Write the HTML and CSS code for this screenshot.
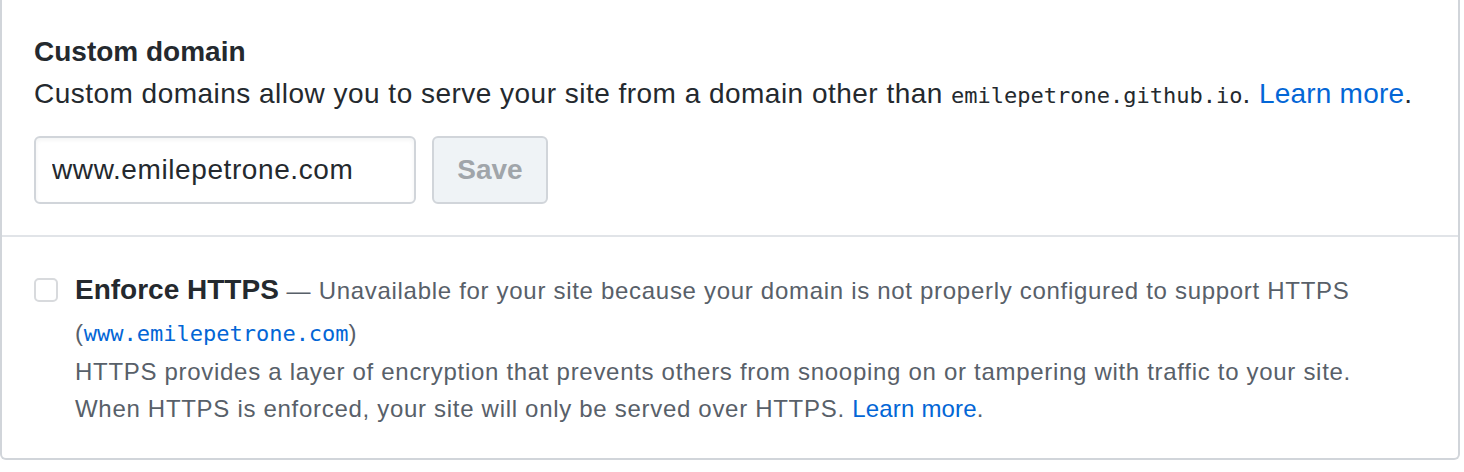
FILE: index.html
```html
<!DOCTYPE html>
<html>
<head>
<meta charset="utf-8">
<link rel="stylesheet" href="styles.css">
</head>
<body>
<div class="box">
  <section class="row">
    <h3 class="heading">Custom domain</h3>
    <p class="desc">Custom domains allow you to serve your site from a domain other than <code class="mono">emilepetrone.github.io</code>. <a class="link" href="#">Learn more</a>.</p>
    <form class="domain-form">
      <input class="input" type="text" value="www.emilepetrone.com">
      <button class="btn" type="button" disabled>Save</button>
    </form>
  </section>
  <section class="row row-check">
    <div class="form-checkbox">
      <span class="checkbox"></span>
      <div class="check-body">
        <p class="check-line"><strong class="check-label">Enforce HTTPS</strong> <span class="note">— Unavailable for your site because your domain is not properly configured to support HTTPS (<a class="mono link" href="#">www.emilepetrone.com</a>)</span></p>
        <p class="note note-block">HTTPS provides a layer of encryption that prevents others from snooping on or tampering with traffic to your site.<br>When HTTPS is enforced, your site will only be served over HTTPS. <a class="link" href="#">Learn more</a>.</p>
      </div>
    </div>
  </section>
</div>
</body>
</html>
```

FILE: styles.css
```css
html, body {
  margin: 0;
  padding: 0;
  background: #fff;
}
body {
  font-family: "Liberation Sans", Arial, sans-serif;
  font-size: 28px;
  line-height: 1.5;
  color: #24292e;
}
.box {
  width: 1460px;
  box-sizing: border-box;
  border: 2px solid #d1d5da;
  border-top: none;
  border-radius: 0 0 6px 6px;
  height: 460px;
}
.row {
  padding: 31px 32px 31px 32px;
}
.row + .row {
  border-top: 2px solid #e1e4e8;
}
.heading {
  margin: 0;
  font-size: 28px;
  font-weight: bold;
  line-height: 42px;
}
.desc {
  margin: 0 0 19px 0;
  line-height: 42px;
  letter-spacing: 0.48px;
}
.mono {
  font-family: "DejaVu Sans Mono", "Liberation Mono", monospace;
  font-size: 22px;
  letter-spacing: 0;
}
.link {
  color: #0366d6;
  text-decoration: none;
}
.desc .link {
  letter-spacing: 0.2px;
}
.domain-form {
  display: flex;
  gap: 16px;
  margin: 0;
}
.input {
  box-sizing: border-box;
  width: 382px;
  height: 68px;
  padding: 0 16px;
  border: 2px solid #d1d5da;
  border-radius: 6px;
  font-family: "Liberation Sans", Arial, sans-serif;
  font-size: 28px;
  letter-spacing: 0.6px;
  color: #24292e;
  background: #fff;
  box-shadow: inset 0 2px 4px rgba(27,31,35,0.05);
  outline: none;
}
.btn {
  box-sizing: border-box;
  width: 116px;
  height: 68px;
  border: 2px solid #d1d5da;
  border-radius: 6px;
  background: #eff3f6;
  color: #a0a5aa;
  font-family: "Liberation Sans", Arial, sans-serif;
  font-size: 28px;
  font-weight: bold;
  padding: 0;
}
.row-check {
  padding-top: 32px;
}
.form-checkbox {
  display: flex;
  gap: 17px;
}
.checkbox {
  flex: none;
  box-sizing: border-box;
  width: 24px;
  height: 24px;
  margin-top: 9px;
  border: 2px solid #d8dadd;
  border-radius: 5px;
  background: #fff;
}
.check-body {
  flex: 1;
}
.check-line {
  margin: 0;
  line-height: 42px;
}
.check-label {
  font-weight: bold;
}
.note {
  color: #586069;
  font-size: 24px;
  letter-spacing: 0.7px;
}
.check-line .note {
  line-height: 1;
}
.note-block {
  margin: 0;
  line-height: 37px;
}
.note .mono {
  font-size: 22px;
  letter-spacing: 0;
}
.note .link:not(.mono) {
  letter-spacing: 0.2px;
}
```
